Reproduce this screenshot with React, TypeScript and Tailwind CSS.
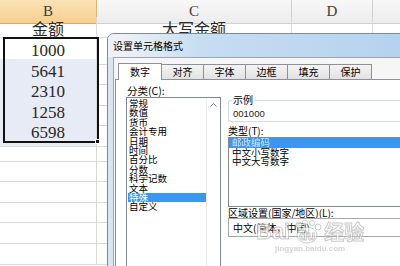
const cjk = '"Noto Sans CJK SC", "Noto Sans", sans-serif';
const serif = '"Liberation Serif", "Noto Sans CJK SC", serif';

const categories = ['常规', '数值', '货币', '会计专用', '日期', '时间', '百分比', '分数', '科学记数', '文本', '特殊', '自定义'];
const types = ['邮政编码', '中文小写数字', '中文大写数字'];
const values = ['1000', '5641', '2310', '1258', '6598'];
const tabs = ['对齐', '字体', '边框', '填充', '保护'];

function Sheet() {
  const cell = 'border-r border-b border-[#d9d9d9] flex items-center justify-center';
  const rows = Array.from({ length: 11 });
  return (
    <div className="flex flex-col" style={{ fontFamily: serif }}>
      {/* column headers */}
      <div className="grid grid-cols-[97px_195px_81px_1fr] h-[17px] text-[15px] text-[#3d3d3d]">
        <div className="flex items-center justify-center bg-gradient-to-b from-[#fbe3b6] to-[#f6cf8e] border-r border-b border-r-[#e2b46a] border-b-[#eaa544]">B</div>
        <div className="flex items-center justify-center bg-gradient-to-b from-[#f8f8f8] to-[#ececec] border-r border-b border-[#d0d0d0]">C</div>
        <div className="flex items-center justify-center bg-gradient-to-b from-[#f8f8f8] to-[#ececec] border-r border-b border-[#d0d0d0]">D</div>
        <div className="bg-gradient-to-b from-[#f8f8f8] to-[#ececec] border-b border-[#d0d0d0]" />
      </div>
      {/* row 1 */}
      <div className="grid grid-cols-[97px_195px_81px_1fr] h-[21px] text-[16px] leading-[18px] text-[#2a2a2a]" style={{ fontFamily: cjk }}>
        <div className={`${cell} pt-[2px]`}>金额</div>
        <div className={`${cell} pt-[2px]`}>大写金额</div>
        <div className={cell} />
        <div className="border-b border-[#d9d9d9]" />
      </div>
      {rows.map((_, i) => (
        <div key={i} className="grid grid-cols-[97px_195px_81px_1fr] h-[20.6px] text-[17px] text-[#262626]">
          <div className={`${cell} ${i > 0 && i < 5 ? 'bg-[#e7ebf5]' : ''}`}>{values[i] ?? ''}</div>
          <div className={cell} />
          <div className={cell} />
          <div className="border-b border-[#d9d9d9]" />
        </div>
      ))}
    </div>
  );
}

function Dialog() {
  return (
    <div
      className="absolute left-[107px] top-[33px] w-[310px] h-[250px] rounded-tl-[7px] border border-[#7b8b9d] bg-[#dbe5f0] overflow-hidden flex flex-col"
      style={{ fontFamily: cjk }}
    >
      {/* title bar */}
      <div className="h-[23px] shrink-0 bg-gradient-to-r from-[#eef1f5] from-[5%] via-[#c6ddf2] via-[30%] to-[#b4d2ee] pl-[5px] pt-[6px] text-[10px] leading-[11px] text-black">
        设置单元格格式
      </div>
      <div className="flex-1 pl-[5px] flex">
        <div className="flex-1 border-l border-t border-[#97a7b9] bg-[#f6f6f6] flex flex-col">
          {/* tabs */}
          <div className="flex items-end pl-[4px] pt-[5px] text-[10px] leading-[10px] text-black">
            <div className="w-[44px] h-[17px] bg-white border border-b-0 border-[#8e9199] flex items-center justify-center -mb-px relative z-10">数字</div>
            {tabs.map((t) => (
              <div key={t} className="w-[42px] h-[15px] bg-gradient-to-b from-[#f4f4f4] to-[#e2e2e2] border border-l-0 border-b-0 border-[#8e9199] flex items-center justify-center">
                {t}
              </div>
            ))}
          </div>
          {/* tab page */}
          <div className="flex-1 ml-[1px] bg-white border-l border-t border-[#8e9199] pl-[10px] pt-[5px] flex gap-[7px] text-[10px] text-black">
            {/* category column */}
            <div className="w-[95px] flex flex-col">
              <div className="h-[12px] leading-[12px] text-[10.5px] pl-[1px]">分类(C):</div>
              <div className="flex-1 border border-[#828790] flex">
                <div className="flex-1 pt-[1px] pl-[1px]">
                  {categories.map((c) => (
                    <div
                      key={c}
                      className={`h-[9.4px] leading-[9.4px] text-[9.5px] pl-[1px] whitespace-nowrap ${c === '特殊' ? 'bg-[#3a96ef] text-white' : ''}`}
                    >
                      {c}
                    </div>
                  ))}
                </div>
                <div className="w-[14px] border-l border-[#ececec] flex justify-center pt-[5px]">
                  <svg width="7" height="4" viewBox="0 0 7 4">
                    <path d="M0.5 3.5 L3.5 0.5 L6.5 3.5" fill="none" stroke="#8a8a8a" strokeWidth="1" />
                  </svg>
                </div>
              </div>
            </div>
            {/* right column */}
            <div className="flex-1 flex flex-col pt-[15px]">
              <div className="relative h-[22px] border border-r-0 border-[#d3dbe2] rounded-l-[3px]">
                <span className="absolute -top-[6px] left-[3px] bg-white px-[1px] text-[10px] leading-[10px]">示例</span>
                <div className="pl-[4px] pt-[8px] text-[9.5px] leading-[10px] text-[#222]" style={{ fontFamily: '"Liberation Sans", sans-serif' }}>
                  001000
                </div>
              </div>
              <div className="mt-[3px] h-[11px] leading-[11px] text-[10px]">类型(T):</div>
              <div className="mt-px h-[70px] border border-r-0 border-[#828790] text-[9.5px]">
                {types.map((t, i) => (
                  <div key={t} className={`h-[9.6px] leading-[9.6px] pl-[3px] whitespace-nowrap ${i === 0 ? 'bg-[#3a96ef] text-[#cfe6ff] blur-[0.6px]' : ''}`}>
                    {t}
                  </div>
                ))}
              </div>
              <div className="mt-px h-[10px] leading-[10px] text-[10px] whitespace-nowrap">区域设置(国家/地区)(L):</div>
              <div className="h-[19px] border border-r-0 border-[#a8a8a8] flex items-center pl-[4px] text-[10px] whitespace-nowrap">
                中文(简体，中国)
              </div>
            </div>
          </div>
        </div>
      </div>
    </div>
  );
}

function Watermark() {
  return (
    <div className="absolute left-[256px] top-[220px] flex flex-col items-center opacity-70 pointer-events-none" style={{ fontFamily: '"Liberation Sans", "Noto Sans CJK SC", sans-serif' }}>
      <div className="flex items-center gap-[2px] text-[22px] leading-[24px] font-bold text-white [-webkit-text-stroke:1px_#b5b5b5]">
        <span>Bai</span>
        <span className="relative w-[30px] h-[24px] flex items-center justify-center">
          <svg className="absolute inset-0" width="30" height="24" viewBox="0 0 30 24">
            <ellipse cx="15" cy="15" rx="10" ry="8" fill="white" stroke="#b5b5b5" />
            <circle cx="7" cy="5" r="3" fill="white" stroke="#b5b5b5" />
            <circle cx="13" cy="2.5" r="2.5" fill="white" stroke="#b5b5b5" />
            <circle cx="20" cy="3" r="2.5" fill="white" stroke="#b5b5b5" />
            <circle cx="26" cy="7" r="3" fill="white" stroke="#b5b5b5" />
          </svg>
          <span className="relative text-[13px] leading-[13px] mt-[6px]">du</span>
        </span>
        <span className="text-[20px]" style={{ fontFamily: cjk }}>经验</span>
      </div>
      <div className="text-[8px] leading-[9px] text-[#c4c4c4] font-bold">jingyan.baidu.com</div>
    </div>
  );
}

export default function App() {
  return (
    <div className="relative w-[400px] h-[266px] overflow-hidden bg-white">
      <Sheet />
      {/* selection border around B2:B6 */}
      <div className="absolute left-[3px] top-[37px] w-[96px] h-[106px] border-2 border-[#111]" />
      <div className="absolute left-[95px] top-[139px] w-[5px] h-[5px] bg-[#111] border border-white" />
      <Dialog />
      <Watermark />
    </div>
  );
}
